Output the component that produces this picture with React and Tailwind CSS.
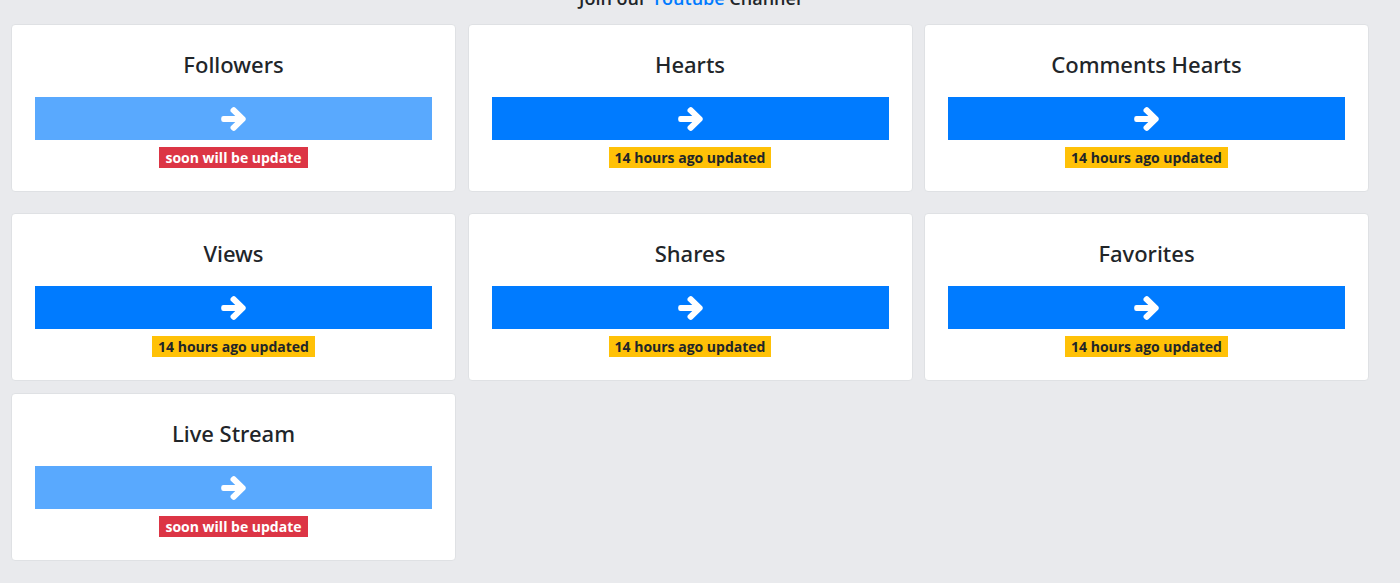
import React from 'react';

const ITEMS = [
    { title: 'Followers', ready: false },
    { title: 'Hearts', ready: true },
    { title: 'Comments Hearts', ready: true },
    { title: 'Views', ready: true },
    { title: 'Shares', ready: true },
    { title: 'Favorites', ready: true },
    { title: 'Live Stream', ready: false },
];

const rowGap = ['mt-0', 'mt-[21px]', 'mt-[12px]'];

function ArrowRight() {
    return (
        <svg viewBox="-24 -24 496 560" className="h-[28px] w-[25px] fill-white stroke-white" strokeWidth="44" strokeLinejoin="round">
            <path d="M190.5 66.9l22.2-22.2c9.4-9.4 24.6-9.4 33.9 0L441 239c9.4 9.4 9.4 24.6 0 33.9L246.6 467.3c-9.4 9.4-24.6 9.4-33.9 0l-22.2-22.2c-9.5-9.5-9.3-25 .4-34.3L311.4 296H24c-13.3 0-24-10.7-24-24v-32c0-13.3 10.7-24 24-24h287.4L190.9 101.2c-9.8-9.3-10-24.8-.4-34.3z" />
        </svg>
    );
}

function ServiceCard({ title, ready, row }) {
    return (
        <div className={`${rowGap[row]} bg-white border border-[#dfe1e4] rounded-[4px] px-[23px] pt-[26px] pb-[23px] flex flex-col items-center`}>
            <h4 className="h-[27px] leading-[27px] text-[22px] font-medium text-[#212529]" style={{ fontFamily: '"Noto Sans", "Open Sans", sans-serif' }}>
                {title}
            </h4>
            <button
                className={`mt-[19px] w-full h-[43px] flex items-center justify-center ${ready ? 'bg-[#007bff]' : 'bg-[#59a9fe]'}`}
            >
                <ArrowRight />
            </button>
            {ready ? (
                <span className="mt-[7px] h-[21px] leading-[21px] px-[6px] bg-[#ffc107] text-[#212529] text-[14px] font-bold">
                    14 hours ago updated
                </span>
            ) : (
                <span className="mt-[7px] h-[21px] leading-[21px] px-[6px] bg-[#dc3545] text-white text-[14px] font-bold">
                    soon will be update
                </span>
            )}
        </div>
    );
}

export default function App() {
    return (
        <div className="min-h-[583px] bg-[#e9eaed] overflow-hidden" style={{ fontFamily: '"Open Sans", "Noto Sans", sans-serif' }}>
            <p className="-mt-[14px] h-[24px] leading-[24px] text-center text-[18px] font-semibold text-[#212529] pr-[20px]">
                Join our <span className="text-[#007bff]">Youtube</span> Channel
            </p>
            <div className="mt-[14px] grid grid-cols-3 gap-x-[11.5px] pl-[11px] pr-[31px]">
                {ITEMS.map((it, i) => (
                    <ServiceCard key={it.title} title={it.title} ready={it.ready} row={Math.floor(i / 3)} />
                ))}
            </div>
        </div>
    );
}
